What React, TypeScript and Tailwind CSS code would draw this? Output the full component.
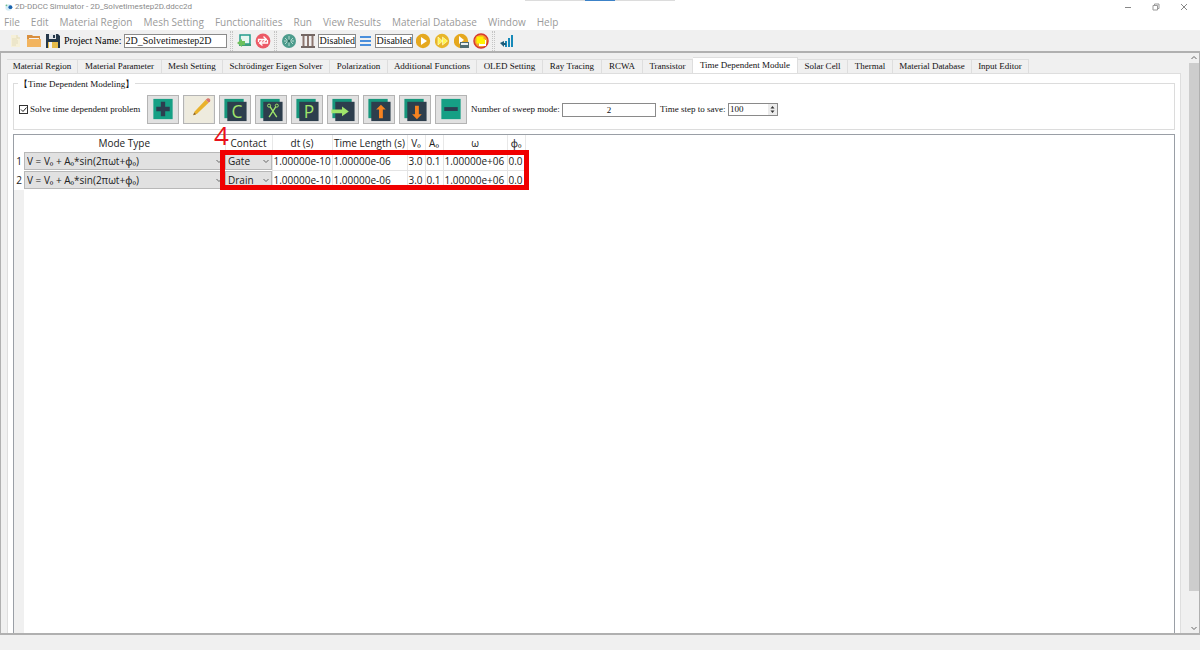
import type { ReactNode } from "react";
import clsx from "clsx";

const menus = [
  "File",
  "Edit",
  "Material Region",
  "Mesh Setting",
  "Functionalities",
  "Run",
  "View Results",
  "Material Database",
  "Window",
  "Help",
];

const tabs = [
  { label: "Material Region", width: "w-[71px]" },
  { label: "Material Parameter", width: "w-[84px]" },
  { label: "Mesh Setting", width: "w-[61px]" },
  { label: "Schrödinger Eigen Solver", width: "w-[107px]" },
  { label: "Polarization", width: "w-[58px]" },
  { label: "Additional Functions", width: "w-[89px]" },
  { label: "OLED Setting", width: "w-[66px]" },
  { label: "Ray Tracing", width: "w-[59px]" },
  { label: "RCWA", width: "w-[41px]" },
  { label: "Transistor", width: "w-[50px]" },
  { label: "Time Dependent Module", width: "w-[105px]", active: true },
  { label: "Solar Cell", width: "w-[50px]" },
  { label: "Thermal", width: "w-[45px]" },
  { label: "Material Database", width: "w-[79px]" },
  { label: "Input Editor", width: "w-[57px]" },
];

const columns = [
  { label: "", width: "w-[10px]" },
  { label: "Mode Type", width: "w-[201px]" },
  { label: "Contact", width: "w-[47px]" },
  { label: "dt (s)", width: "w-[60px]" },
  { label: "Time Length (s)", width: "w-[75px]" },
  { label: "V₀", width: "w-[18px]" },
  { label: "A₀", width: "w-[18px]" },
  { label: "ω", width: "w-[64px]" },
  { label: "ϕ₀", width: "w-[18px]" },
];

const rows = [
  { contact: "Gate", values: ["1.00000e-10", "1.00000e-06", "3.0", "0.1", "1.00000e+06", "0.0"] },
  { contact: "Drain", values: ["1.00000e-10", "1.00000e-06", "3.0", "0.1", "1.00000e+06", "0.0"] },
];

function Icon({ children, label }: { children: ReactNode; label: string }) {
  return (
    <button type="button" aria-label={label} className="h-4 w-4 shrink-0">
      <svg viewBox="0 0 16 16" className="h-4 w-4">
        {children}
      </svg>
    </button>
  );
}

function Handle() {
  return <span className="h-5 w-[3px] shrink-0 border-x border-dotted border-[#c4c4c4]" />;
}

function Chevron({ className }: { className?: string }) {
  return (
    <svg viewBox="0 0 8 8" className={clsx("h-2 w-2", className)} fill="none" stroke="#666">
      <path d="M1.5 3 4 5.5 6.5 3" />
    </svg>
  );
}

function TitleBar() {
  return (
    <header className="relative flex h-[14px] items-center bg-white pl-[5px] text-[#8a8a8a]">
      <svg viewBox="0 0 10 10" className="h-[9px] w-[9px]">
        <circle cx="4" cy="5" r="3.6" fill="#d4ecf5" />
        <circle cx="6" cy="4.6" r="2.2" fill="#1a63ae" />
        <circle cx="1.6" cy="2.6" r="1" fill="#6fbe8a" />
      </svg>
      <h1 className="ml-px font-['Roboto',sans-serif] text-[8px] leading-[14px]">
        2D-DDCC Simulator - 2D_Solvetimestep2D.ddcc2d
      </h1>
      <span className="absolute top-0 left-1/2 flex h-px w-[150px] -translate-x-1/2 justify-center bg-[#dcdcdc]">
        <span className="h-px w-[30px] bg-[#3c82c8]" />
      </span>
      <div className="ml-auto flex items-center gap-[18px] pr-[11px]">
        <button type="button" aria-label="Minimize" className="h-[10px] w-[10px]">
          <svg viewBox="0 0 10 10" stroke="#888">
            <path d="M2 5.5h6" />
          </svg>
        </button>
        <button type="button" aria-label="Restore" className="h-[10px] w-[10px]">
          <svg viewBox="0 0 10 10" fill="none" stroke="#999">
            <path d="M2 3.5h4.5V8H2zM3.5 3.5V2H8v4.5H6.5" />
          </svg>
        </button>
        <button type="button" aria-label="Close" className="h-[10px] w-[10px]">
          <svg viewBox="0 0 10 10" stroke="#888">
            <path d="m2 2 6 6M8 2 2 8" />
          </svg>
        </button>
      </div>
    </header>
  );
}

function Toolbar() {
  return (
    <div className="flex h-[21px] items-center gap-[3px] bg-[#f0f0f0] pl-[7px] font-['Liberation_Serif',serif] text-[10px]">
      <Icon label="New">
        <path d="M4 2h6l3 3v9H4z" fill="#f6f0d8" />
        <path d="M10 2v3h3M5 6h5M5 8h6M5 10h6M5 12h4" fill="none" stroke="#e3dcbc" />
      </Icon>
      <Icon label="Open">
        <path d="M1 2h5l1 1h7v4H1z" fill="#d9903f" />
        <path d="M3 5h10v2H3z" fill="#f4f4f4" />
        <path d="M1 6h14v8H1z" fill="#f2b45f" />
      </Icon>
      <Icon label="Save">
        <path d="M1 1h12l2 2v12H1z" fill="#25384a" />
        <path d="M4 1h7v5H4z" fill="#e2e6ea" />
        <path d="M8 2h2v3H8z" fill="#25384a" />
        <path d="M3 9h10v6H3z" fill="#e7bd4c" />
        <path d="M4 9h3v6H4z" fill="#f4f4f4" />
      </Icon>
      <label htmlFor="project" className="whitespace-nowrap text-black">
        Project Name:
      </label>
      <input
        id="project"
        defaultValue="2D_Solvetimestep2D"
        className="h-[14px] w-[103px] border border-[#8a8a8a] bg-white leading-3"
      />
      <Handle />
      <Icon label="Load mesh">
        <path d="M4 2h10v9H4z" fill="#e8f6f0" stroke="#239c8c" strokeWidth="1.5" />
        <path d="M3 11h12v2H3z" fill="#3f9d7a" />
        <path d="m1 10 5-4v2h3v4H6v2z" fill="#6cc05c" />
      </Icon>
      <Icon label="Refresh">
        <circle cx="8" cy="8" r="7.4" fill="#ec5a66" />
        <path
          d="M3.5 9V6.5h7M8.5 3.5l3 3-3 2.5M12.5 7v3h-7M7.5 7.5l-3 2.500 3 2.500"
          fill="none"
          stroke="#fff"
          strokeWidth="1.3"
        />
      </Icon>
      <Handle />
      <Icon label="Structure">
        <circle cx="9" cy="8" r="7" fill="#4d9c8d" />
        <path d="M9 3v10M5 5l3 3-3 3M13 5l-3 3 3 3M4 8h10" fill="none" stroke="#b5dbd0" />
        <circle cx="9" cy="8" r="1.6" fill="#2c6f64" />
      </Icon>
      <Icon label="Poisson">
        <path d="M2 2h14M2 14h14" stroke="#4a3a35" strokeWidth="1.5" />
        <path d="M4.5 3v10M9 3v10M13.5 3v10" stroke="#8d7770" strokeWidth="2" />
      </Icon>
      <input
        aria-label="Solver state"
        readOnly
        value="Disabled"
        className="h-[14px] w-[38px] border border-[#8a8a8a] bg-white leading-3"
      />
      <button type="button" aria-label="Levels" className="w-[13px] shrink-0">
        <svg viewBox="0 0 13 16" className="h-4 w-[13px]" stroke="#4a8fdc" strokeWidth="2">
          <path d="M1 4h11M1 8h11M1 12h11" />
        </svg>
      </button>
      <input
        aria-label="Level state"
        readOnly
        value="Disabled"
        className="h-[14px] w-[38px] border border-[#8a8a8a] bg-white leading-3"
      />
      <Icon label="Run">
        <circle cx="7" cy="8" r="7.2" fill="#e5a81f" />
        <path d="m5 4 6 4-6 4z" fill="#fff" />
      </Icon>
      <Icon label="Run all">
        <circle cx="7" cy="8" r="7.2" fill="#e8b62a" />
        <path d="m3 4 4.5 4L3 12zM7.5 4l5 4-5 4z" fill="#fff84a" stroke="#fffce0" strokeWidth=".6" />
      </Icon>
      <Icon label="Run batch">
        <circle cx="7" cy="8" r="7.2" fill="#e5a81f" />
        <path d="m5 3 5 4-5 4z" fill="#fff" />
        <path d="M6 9h9v6H6z" fill="#4f6b70" />
        <path d="M7 10h7v2H7z" fill="#e8efef" />
      </Icon>
      <Icon label="Stop">
        <circle cx="8" cy="8" r="7" fill="#f3a02c" stroke="#d8392f" strokeWidth="1.5" />
        <path d="M6 7h7v6H6z" fill="#fff" />
        <path d="M3.5 3.5h7v7h-7z" fill="#fff200" />
        <path d="M7 6h5v5H7z" fill="#fff200" />
      </Icon>
      <Handle />
      <Icon label="Plot">
        <path d="M7 8h2v6H7zM10 5h2v9h-2zM13 2h2v12h-2z" fill="#1689b8" />
        <path d="m2 10 4-2v2h2v2H6v2z" fill="#1c5b7a" />
      </Icon>
    </div>
  );
}

function BackSheet({ children }: { children: ReactNode }) {
  return (
    <>
      <path d="M4 3h20v20H4z" fill="#17977c" />
      <path d="M7 6h20v20H7z" fill="#2d3e4d" />
      {children}
    </>
  );
}

const actions = [
  {
    label: "Add",
    art: (
      <>
        <path d="M5 3h20v21H5z" fill="#16a085" />
        <path d="M15 6v15M8 13.5h14" stroke="#2c3e50" strokeWidth="4.5" />
      </>
    ),
  },
  {
    label: "Edit",
    art: (
      <>
        <path d="M0 0h30v28H0z" fill="#eeebde" />
        <path d="m9 20 1.5-4L22 4l3 3-12 11.5z" fill="#e9b22c" />
        <path d="m22 4 1.5-1.5c2-1 4 1 3 3L25 7z" fill="#d9776c" />
        <path d="m9 20 1-3 2 2z" fill="#8a6432" />
      </>
    ),
  },
  {
    label: "Copy",
    art: (
      <BackSheet>
        <text x="17" y="22.5" textAnchor="middle" fontSize="18" fill="#a0e56b">
          C
        </text>
      </BackSheet>
    ),
  },
  {
    label: "Cut",
    art: (
      <BackSheet>
        <path d="m13 22 7-11M21 22l-7-11" stroke="#a0e56b" strokeWidth="1.4" />
        <g fill="none" stroke="#a0e56b">
          <circle cx="13" cy="10" r="1.6" />
          <circle cx="21" cy="10" r="1.6" />
        </g>
      </BackSheet>
    ),
  },
  {
    label: "Paste",
    art: (
      <BackSheet>
        <text x="17" y="22.5" textAnchor="middle" fontSize="18" fill="#a0e56b">
          P
        </text>
      </BackSheet>
    ),
  },
  {
    label: "Insert",
    art: (
      <BackSheet>
        <path d="M3 14h11v-3l7 5-7 5v-3H3z" fill="#a0e56b" />
      </BackSheet>
    ),
  },
  {
    label: "Move up",
    art: (
      <BackSheet>
        <path d="m17 9 5 5h-3v9h-4v-9h-3z" fill="#f58220" />
      </BackSheet>
    ),
  },
  {
    label: "Move down",
    art: (
      <BackSheet>
        <path d="m17 24 5-5h-3v-9h-4v9h-3z" fill="#f58220" />
      </BackSheet>
    ),
  },
  {
    label: "Remove",
    art: (
      <>
        <path d="M5 3h20v21H5z" fill="#16a085" />
        <path d="M8 13.5h14" stroke="#2c3e50" strokeWidth="4" />
      </>
    ),
  },
];

function ModelingGroup() {
  return (
    <fieldset className="relative flex h-[47px] items-center border border-[#dcdcdc] pt-[11px] pl-[5px] font-['Liberation_Serif',serif] text-[9px]">
      <legend className="absolute top-[-6px] left-1 bg-white px-px leading-3">
        【Time Dependent Modeling】
      </legend>
      <label className="flex w-[128px] shrink-0 items-center gap-[2px] whitespace-nowrap">
        <input
          type="checkbox"
          defaultChecked
          className="peer h-[9px] w-[9px] appearance-none border border-[#333] bg-white"
        />
        <svg
          viewBox="0 0 9 9"
          className="-ml-[11px] hidden h-[9px] w-[9px] peer-checked:block"
          fill="none"
          stroke="#222"
        >
          <path d="m2 4.5 2 2 3.5-4" />
        </svg>
        Solve time dependent problem
      </label>
      <div className="flex gap-1">
        {actions.map((action) => (
          <button
            key={action.label}
            type="button"
            aria-label={action.label}
            className="h-[29px] w-8 shrink-0 border border-[#b4b4b4] bg-[#e1e1e1]"
          >
            <svg viewBox="0 0 30 28" className="h-[27px] w-[30px] font-['Open_Sans',sans-serif]">
              {action.art}
            </svg>
          </button>
        ))}
      </div>
      <label htmlFor="sweep" className="ml-1 w-[91px] whitespace-nowrap">
        Number of sweep mode:
      </label>
      <input
        id="sweep"
        defaultValue="2"
        className="h-[14px] w-[94px] border border-[#8a8a8a] bg-white text-center leading-3"
      />
      <label htmlFor="save-step" className="ml-1 w-[68px] whitespace-nowrap">
        Time step to save:
      </label>
      <div className="flex h-[13px] w-[50px] border border-[#8a8a8a] bg-white">
        <input id="save-step" defaultValue="100" className="w-full min-w-0 px-px leading-[11px]" />
        <button type="button" aria-label="Step value" className="w-[9px] shrink-0 bg-[#ececec]">
          <svg viewBox="0 0 9 11" className="h-[11px] w-[9px]" fill="#333">
            <path d="m4.5 2 2 2.5h-4zM4.5 9l2-2.5h-4z" />
          </svg>
        </button>
      </div>
    </fieldset>
  );
}

function CellSelect({ label, value }: { label: string; value: string }) {
  return (
    <div className="relative">
      <select
        aria-label={label}
        defaultValue={value}
        className="block h-[18px] w-full appearance-none border border-[#b8b8b8] bg-[#e1e1e1] pl-[2px] text-[10px] leading-4"
      >
        <option>{value}</option>
      </select>
      <Chevron className="pointer-events-none absolute top-[5px] right-[2px]" />
    </div>
  );
}

function ModeTable() {
  return (
    <div className="relative mt-1 flex min-h-0 flex-1 flex-col border border-b-0 border-[#9a9fa6] bg-white">
      <table className="w-[511px] table-fixed border-collapse text-left text-[10px] leading-4 text-[#222]">
        <thead>
          <tr className="h-4">
            {columns.map((column, i) => (
              <th
                key={column.label || "row"}
                className={clsx(
                  column.width,
                  "p-0 text-center font-normal whitespace-nowrap",
                  i > 0 && "border-r border-[#e8e8e8]",
                )}
              >
                {column.label}
              </th>
            ))}
          </tr>
        </thead>
        <tbody>
          {rows.map((row, i) => (
            <tr key={row.contact} className="h-[19px]">
              <th scope="row" className="p-0 text-center font-normal">
                {i + 1}
              </th>
              <td className="p-0">
                <CellSelect label={`Mode type ${i + 1}`} value="V = V₀ + A₀*sin(2πωt+ϕ₀)" />
              </td>
              <td className="p-0">
                <CellSelect label={`Contact ${i + 1}`} value={row.contact} />
              </td>
              {row.values.map((value, j) => (
                <td key={j} className="border border-[#e4e4e4] p-0 pl-px whitespace-nowrap">
                  {value}
                </td>
              ))}
            </tr>
          ))}
        </tbody>
      </table>
      <div className="w-[10px] flex-1 bg-[#f0f0f0]" />
      <span className="absolute top-[-13px] left-[200px] text-[26px] leading-[26px] text-[#e8101a]">
        4
      </span>
      <div className="pointer-events-none absolute top-[15px] left-[206px] h-10 w-[309px] border-[5px] border-[#f00000]" />
    </div>
  );
}

function ScrollBar() {
  return (
    <div className="flex w-[10px] shrink-0 flex-col items-center bg-[#f0f0f0]">
      <Chevron className="my-px rotate-180" />
      <div className="w-full grow-[16] bg-[#cdcdcd]" />
      <div className="grow" />
      <Chevron className="mb-px" />
    </div>
  );
}

export default function App() {
  return (
    <div className="flex h-screen min-h-[300px] flex-col overflow-hidden bg-[#f0f0f0] font-['Open_Sans','Noto_Sans',sans-serif] text-[#111]">
      <TitleBar />
      <nav className="flex h-4 items-center gap-[11px] bg-white pl-1 text-[10px] text-[#9a9a9a]">
        {menus.map((menu) => (
          <button key={menu} type="button" className="leading-4 whitespace-nowrap">
            {menu}
          </button>
        ))}
      </nav>
      <Toolbar />
      <main className="flex min-h-0 flex-1 border-x border-y-2 border-[#b0b0b0] pl-[6px]">
        <div className="flex min-w-0 flex-1 flex-col pt-1">
          <div
            role="tablist"
            className="flex h-4 shrink-0 items-end font-['Liberation_Serif',serif] text-[9px]"
          >
            {tabs.map((tab) => (
              <button
                key={tab.label}
                type="button"
                role="tab"
                aria-selected={!!tab.active}
                className={clsx(
                  tab.width,
                  "shrink-0 border-t border-r border-[#dedede] whitespace-nowrap",
                  tab.active ? "h-4 bg-white" : "h-[14px]",
                )}
              >
                {tab.label}
              </button>
            ))}
          </div>
          <div className="flex min-h-0 flex-1 flex-col border border-b-0 border-[#dedede] bg-white px-[5px] pt-[9px]">
            <ModelingGroup />
            <ModeTable />
          </div>
        </div>
        <div className="w-2 shrink-0" />
        <ScrollBar />
      </main>
      <footer className="h-[15px] shrink-0 bg-[#f0f0f0]" />
    </div>
  );
}
